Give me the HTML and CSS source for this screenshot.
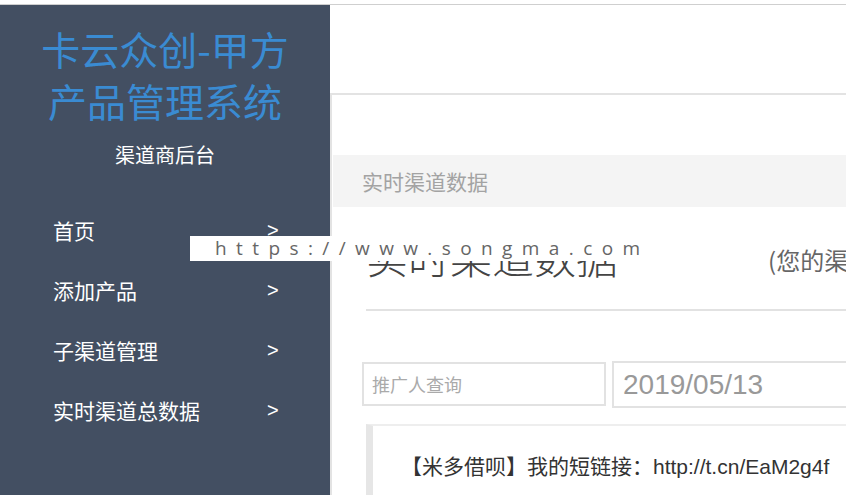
FILE: index.html
```html
<!DOCTYPE html>
<html lang="zh-CN">
<head>
<meta charset="utf-8">
<title>卡云众创-甲方产品管理系统</title>
<link rel="stylesheet" href="styles.css">
</head>
<body>
<div class="topline"></div>
<div class="layout">
  <aside class="sidebar">
    <div class="brand">卡云众创-甲方<br>产品管理系统</div>
    <div class="sub">渠道商后台</div>
    <ul class="menu">
      <li><span>首页</span><span class="arr">&gt;</span></li>
      <li><span>添加产品</span><span class="arr">&gt;</span></li>
      <li><span>子渠道管理</span><span class="arr">&gt;</span></li>
      <li><span>实时渠道总数据</span><span class="arr">&gt;</span></li>
    </ul>
  </aside>
  <main class="main">
    <div class="panel">
      <div class="crumb">实时渠道数据</div>
      <div class="content">
        <h1 class="title"><span>实时渠道数据</span><small>(您的渠道数据)</small></h1>
        <hr class="rule">
        <div class="search">
          <div class="field promoter">推广人查询</div>
          <div class="field date">2019/05/13</div>
        </div>
        <div class="notice">【米多借呗】我的短链接：http://t.cn/EaM2g4f</div>
      </div>
    </div>
  </main>
</div>
<div class="watermark">https://www.songma.com</div>
</body>
</html>
```
FILE: styles.css
```css
html, body {
  margin: 0;
  padding: 0;
  height: 100%;
  overflow: hidden;
  background: #fff;
  font-family: "Liberation Sans", "Noto Sans CJK SC", sans-serif;
}
.topline {
  height: 4px;
  border-bottom: 1px solid #cfcfcf;
}
.layout {
  display: flex;
  height: calc(100% - 5px);
}
.sidebar {
  width: 330px;
  flex: none;
  background: #434f62;
  padding-top: 17px;
  box-sizing: border-box;
}
.brand {
  color: #3a8bd2;
  font-family: "Noto Sans CJK SC", sans-serif;
  font-size: 39px;
  line-height: 52px;
  text-align: center;
}
.sub {
  color: #fff;
  font-family: "Noto Sans CJK SC", sans-serif;
  font-size: 20px;
  line-height: 30px;
  text-align: center;
  margin-top: 14px;
}
.menu {
  list-style: none;
  margin: 30px 0 0;
  padding: 0;
}
.menu li {
  height: 60px;
  display: flex;
  align-items: center;
  padding-left: 53px;
  color: #fff;
  font-size: 21px;
}
.menu li span:first-child {
  width: 214px;
  font-family: "Noto Sans CJK SC", sans-serif;
}
.menu .arr {
  font-size: 20px;
}
.main {
  flex: 1;
  min-width: 0;
  padding-top: 88px;
}
.panel {
  width: 720px;
  height: 100%;
  border-top: 2px solid #e3e3e3;
  border-left: 2px solid #e3e3e3;
  padding-top: 60px;
  box-sizing: border-box;
}
.crumb {
  margin-left: 1px;
  height: 52px;
  line-height: 52px;
  background: #f4f4f4;
  padding-left: 29px;
  color: #a3a3a3;
  font-size: 21px;
  font-family: "Noto Sans CJK SC", sans-serif;
}
.content {
  padding-left: 34px;
}
.title {
  margin: 18px 0 0;
  height: 60px;
  display: flex;
  align-items: center;
  font-weight: 300;
  font-size: 42px;
  color: #444;
  font-family: "Noto Sans CJK SC", sans-serif;
}
.title small {
  font-size: 24px;
  color: #666;
  margin-left: 150px;
  margin-top: 8px;
  font-weight: 400;
}
.rule {
  margin: 24px 0 0;
  border: 0;
  border-top: 2px solid #e2e2e2;
  height: 0;
}
.search {
  display: flex;
  align-items: flex-start;
  gap: 6px;
  margin: 50px 0 0 -4px;
}
.field {
  box-sizing: border-box;
  border: 2px solid #e2e2e2;
  display: flex;
  align-items: center;
}
.promoter {
  width: 244px;
  height: 44px;
  margin-top: 1px;
  padding-left: 8px;
  font-size: 18px;
  color: #aaa;
  font-family: "Noto Sans CJK SC", sans-serif;
}
.date {
  width: 300px;
  height: 47px;
  padding-left: 9px;
  font-size: 28px;
  color: #999;
}
.notice {
  margin-top: 16px;
  border-top: 2px solid #eee;
  border-left: 7px solid #e6e6e6;
  height: 80px;
  padding: 24px 0 0 28px;
  box-sizing: border-box;
  font-size: 21px;
  color: #333;
  white-space: nowrap;
}
.watermark {
  position: absolute;
  left: 190px;
  top: 236px;
  width: 455px;
  height: 25px;
  box-sizing: border-box;
  padding-left: 25px;
  background: #fff;
  color: #666;
  font-family: "Open Sans", sans-serif;
  font-size: 19px;
  line-height: 24px;
  letter-spacing: 9.4px;
  white-space: nowrap;
}
```
